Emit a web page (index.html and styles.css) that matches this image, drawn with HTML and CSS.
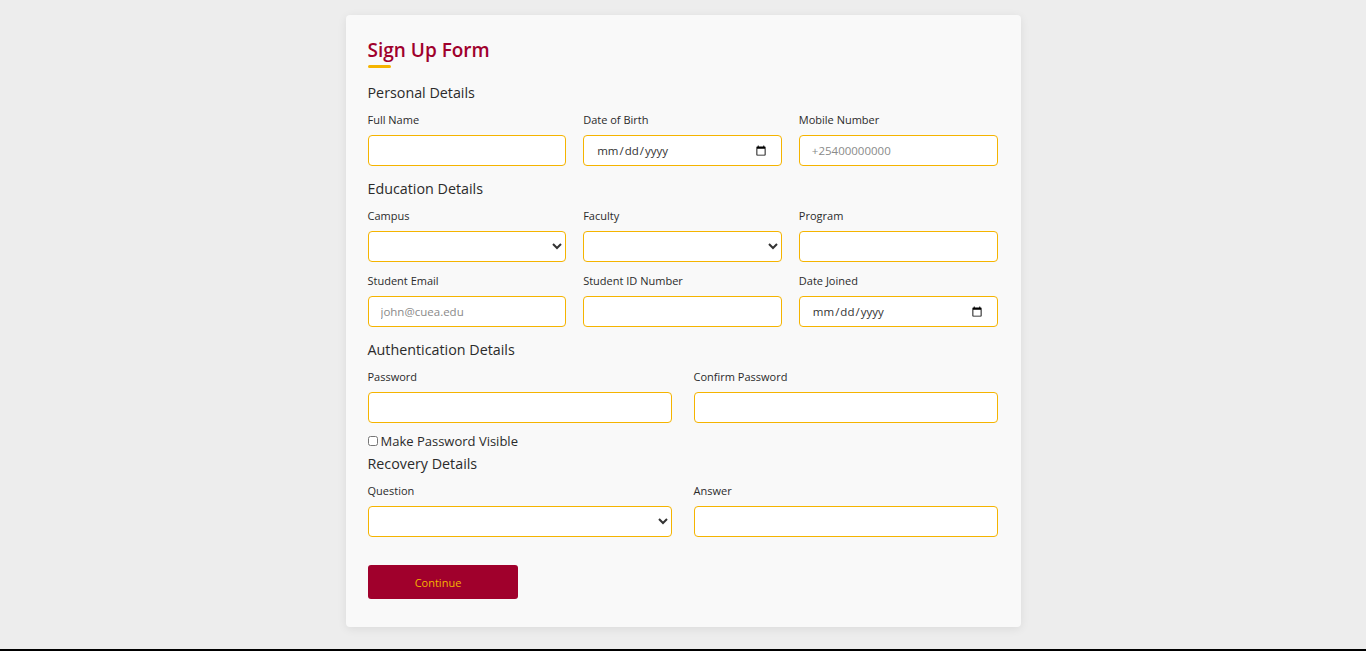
FILE: index.html
```html
<!DOCTYPE html>
<html lang="en">
<head>
<meta charset="utf-8">
<title>Sign Up Form</title>
<link rel="stylesheet" href="styles.css">
</head>
<body>
<div class="page">
  <form class="card">
    <h1 class="title">Sign Up Form</h1>
    <div class="title-bar"></div>

    <section class="section first">
      <h2 class="section-title">Personal Details</h2>
      <div class="grid three">
        <label class="field"><span class="label">Full Name</span><input type="text" class="control"></label>
        <label class="field"><span class="label">Date of Birth</span><input type="date" class="control"></label>
        <label class="field"><span class="label">Mobile Number</span><input type="tel" class="control" placeholder="+25400000000"></label>
      </div>
    </section>

    <section class="section">
      <h2 class="section-title">Education Details</h2>
      <div class="grid three">
        <label class="field"><span class="label">Campus</span><select class="control"><option></option></select></label>
        <label class="field"><span class="label">Faculty</span><select class="control"><option></option></select></label>
        <label class="field"><span class="label">Program</span><input type="text" class="control"></label>
        <label class="field"><span class="label">Student Email</span><input type="email" class="control" placeholder="john@cuea.edu"></label>
        <label class="field"><span class="label">Student ID Number</span><input type="text" class="control"></label>
        <label class="field"><span class="label">Date Joined</span><input type="date" class="control"></label>
      </div>
    </section>

    <section class="section">
      <h2 class="section-title">Authentication Details</h2>
      <div class="grid two">
        <label class="field"><span class="label">Password</span><input type="password" class="control"></label>
        <label class="field"><span class="label">Confirm Password</span><input type="password" class="control"></label>
      </div>
      <label class="check"><input type="checkbox" class="check-box"><span>Make Password Visible</span></label>
    </section>

    <section class="section recovery">
      <h2 class="section-title">Recovery Details</h2>
      <div class="grid two">
        <label class="field"><span class="label">Question</span><select class="control"><option></option></select></label>
        <label class="field"><span class="label">Answer</span><input type="text" class="control"></label>
      </div>
    </section>

    <button type="button" class="btn">Continue</button>
  </form>
</div>
</body>
</html>
```

FILE: styles.css
```css
* { box-sizing: border-box; }
html, body { margin: 0; padding: 0; }
body {
  background: #ededed;
  font-family: "Open Sans", "Liberation Sans", sans-serif;
  color: #2b2b2b;
}
.page {
  height: 651px;
  border-bottom: 2px solid #000;
  padding-top: 15px;
}
.card {
  width: 675px;
  margin: 0 auto;
  background: #f9f9f9;
  border-radius: 4px;
  box-shadow: 0 2px 10px rgba(0,0,0,0.08);
  padding: 22px 23px 28px 22px;
}
.title {
  margin: 0;
  font-size: 19px;
  line-height: 26px;
  font-weight: 600;
  color: #a0002c;
}
.title-bar {
  width: 23px;
  height: 3px;
  background: #f5b400;
  border-radius: 2px;
  margin-top: 2px;
}
.section { margin-top: 13px; }
.section.first { margin-top: 15px; }
.section.recovery { margin-top: 5px; }
.section-title {
  margin: 0 0 9px;
  font-size: 14.3px;
  line-height: 20px;
  font-weight: 500;
  color: #2b2b2b;
}
.grid { display: grid; row-gap: 11px; }
.grid.three { grid-template-columns: repeat(3, 1fr); column-gap: 17px; }
.grid.two { grid-template-columns: repeat(2, 1fr); column-gap: 22px; }
.field { display: flex; flex-direction: column; gap: 7px; }
.label {
  font-size: 11px;
  line-height: 16px;
  color: #2b2b2b;
}
.control {
  height: 31px;
  width: 100%;
  border: 1px solid #f5b400;
  border-radius: 4px;
  background: #fff;
  padding: 0 12px;
  font-family: inherit;
  font-size: 11.5px;
  color: #333;
  outline: none;
}
.control::placeholder { color: #8a8a8a; }
select.control { padding: 0 4px; }
.check {
  display: flex;
  align-items: center;
  gap: 3px;
  margin-top: 10px;
  font-size: 13px;
  line-height: 16px;
  color: #2b2b2b;
}
.check-box { margin: 0; width: 10px; height: 10px; }
.btn {
  margin-top: 28px;
  width: 150px;
  height: 34px;
  border: none;
  border-radius: 3px;
  background: #a0002c;
  color: #f5b400;
  font-family: inherit;
  font-size: 11px;
  padding: 0 9px 0 0;
  cursor: pointer;
  display: block;
}
```
